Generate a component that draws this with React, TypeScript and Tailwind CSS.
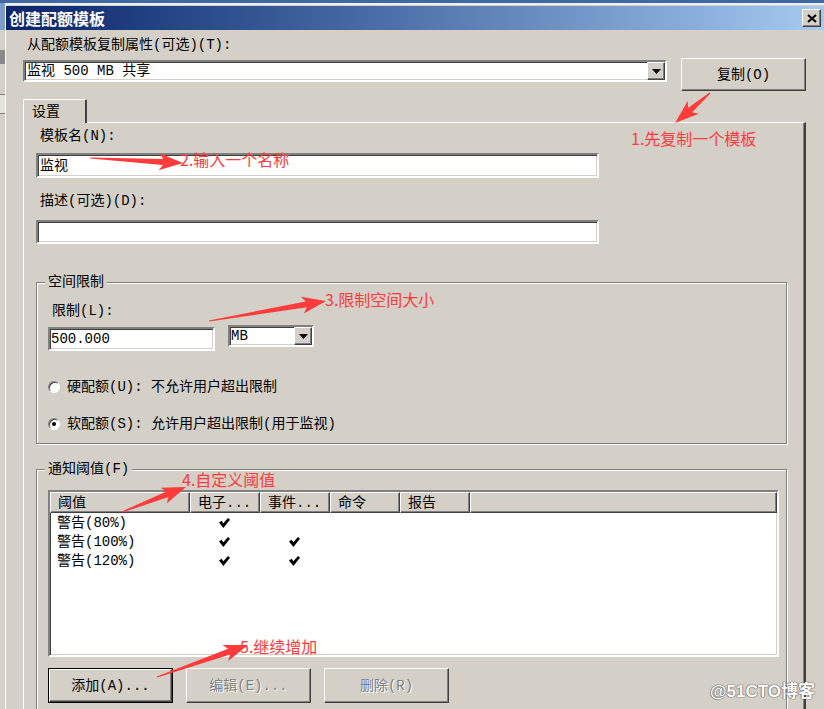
import React from "react";

const raised =
  "border border-t-white border-l-white border-b-[#404040] border-r-[#404040] shadow-[inset_-1px_-1px_0_#808080]";
const sunken =
  "border-2 border-t-[#808080] border-l-[#808080] border-b-white border-r-white shadow-[inset_1px_1px_0_#404040,inset_-1px_-1px_0_#d4d0c8]";
const etched = "border border-[#808080] shadow-[inset_1px_1px_0_#fff,1px_1px_0_#fff]";

function DropButton() {
  return (
    <div className={`w-[18px] h-full bg-[#d4d0c8] flex items-center justify-center ${raised}`}>
      <svg width="9" height="5" viewBox="0 0 9 5">
        <polygon points="0,0 9,0 4.5,5" fill="#000" />
      </svg>
    </div>
  );
}

function Check() {
  return (
    <svg width="11" height="10" viewBox="0 0 11 10">
      <polygon points="0,4.6 2.6,2.8 4.4,5.2 9,0 11,1.8 4.4,10" fill="#000" />
    </svg>
  );
}

function Radio({ checked, label }: { checked?: boolean; label: string }) {
  return (
    <div className="flex items-center h-[16px]">
      <div className="w-[12px] h-[12px] rounded-full bg-white border border-t-[#808080] border-l-[#808080] border-b-white border-r-white shadow-[inset_1px_1px_0_#404040] flex items-center justify-center">
        {checked && <div className="w-[4px] h-[4px] rounded-full bg-black" />}
      </div>
      <span className="ml-[7px] leading-[16px]">{label}</span>
    </div>
  );
}

function Button({ label, disabled, primary }: { label: string; disabled?: boolean; primary?: boolean }) {
  const inner = (
    <div
      className={`w-full h-full flex items-center justify-center bg-[#d4d0c8] ${raised} ${
        disabled ? "text-[#808080] [text-shadow:1px_1px_0_#fff]" : ""
      }`}
    >
      {label}
    </div>
  );
  return (
    <div className={`w-[125px] h-[35px] ${primary ? "border border-black" : ""}`}>{inner}</div>
  );
}

type Arrow = { x1: number; y1: number; x2: number; y2: number };

function arrowPoints({ x1, y1, x2, y2 }: Arrow) {
  const len = Math.hypot(x2 - x1, y2 - y1);
  const ux = (x2 - x1) / len;
  const uy = (y2 - y1) / len;
  const nx = -uy;
  const ny = ux;
  const head = 20;
  const bx = x2 - ux * head;
  const by = y2 - uy * head;
  const wx = x2 - ux * (head + 4);
  const wy = y2 - uy * (head + 4);
  const pts = [
    [x1 + nx * 0.6, y1 + ny * 0.6],
    [bx + nx * 3, by + ny * 3],
    [wx + nx * 8.5, wy + ny * 8.5],
    [x2, y2],
    [wx - nx * 8.5, wy - ny * 8.5],
    [bx - nx * 3, by - ny * 3],
    [x1 - nx * 0.6, y1 - ny * 0.6],
  ];
  return pts.map((p) => p.map((v) => v.toFixed(1)).join(",")).join(" ");
}

const arrows: Arrow[] = [
  { x1: 710, y1: 93, x2: 675, y2: 123 },
  { x1: 90, y1: 158, x2: 183, y2: 163 },
  { x1: 209, y1: 321, x2: 326, y2: 301 },
  { x1: 122, y1: 512, x2: 186, y2: 487 },
  { x1: 157, y1: 677, x2: 248, y2: 645 },
];

const notes = [
  { x: 631, y: 145, text: "1.先复制一个模板" },
  { x: 180, y: 166, text: "2.输入一个名称" },
  { x: 325, y: 306, text: "3.限制空间大小" },
  { x: 182, y: 486, text: "4.自定义阈值" },
  { x: 240, y: 653, text: "5.继续增加" },
];

const rows = [
  { name: "警告(80%)", mail: true, event: false },
  { name: "警告(100%)", mail: true, event: true },
  { name: "警告(120%)", mail: true, event: true },
];

export default function App() {
  return (
    <div className="relative w-[824px] h-[709px] overflow-hidden bg-[#d4d0c8] flex flex-col text-[14px] leading-none text-black font-['Liberation_Mono','Noto_Sans_CJK_SC',monospace]">
      <div className="h-[3px] shrink-0 bg-[#3d6aa3]" />
      <div className="flex flex-1 min-h-0">
        {/* window behind the dialog */}
        <div className="w-[5px] shrink-0 flex flex-col">
          <div className="h-[27px] bg-[#7d9cc9]" />
          <div className="h-[20px]" />
          <div className="h-[14px] bg-[#8a8a8a]" />
          <div className="h-[30px]" />
          <div className="h-[20px] border-y border-[#808080] bg-[#e4e2dc]" />
          <div className="flex-1" />
        </div>
        <div className="w-px shrink-0 bg-white" />

        <div className="flex-1 flex flex-col border-t-2 border-t-[#eef0f4] pt-px">
          {/* title bar */}
          <div className="h-[24px] shrink-0 flex items-center justify-between pl-[3px] pr-[3px] bg-linear-to-r from-[#0a246a] to-[#a6caf0]">
            <span className="text-white font-bold text-[16px] font-['Noto_Sans_CJK_SC',sans-serif]">创建配额模板</span>
            <div className={`w-[19px] h-[18px] flex items-center justify-center bg-[#d4d0c8] ${raised}`}>
              <svg width="10" height="9" viewBox="0 0 10 9">
                <path d="M1 1 L9 8 M9 1 L1 8" stroke="#000" strokeWidth="2" />
              </svg>
            </div>
          </div>

          {/* body */}
          <div className="pl-[17px] flex flex-col">
            <div className="flex items-start shrink-0">
              <div className="w-[644px] pt-[7px]">
                <div className="h-[16px] leading-[16px] ml-[4px]">从配额模板复制属性(可选)(T):</div>
                <div className={`mt-[7px] h-[22px] bg-white flex items-stretch ${sunken}`}>
                  <div className="flex-1 pl-[2px] flex items-center">监视 500 MB 共享</div>
                  <DropButton />
                </div>
              </div>
              <div className="ml-[14px] mt-[28px]">
                <div className={`w-[125px] h-[33px] flex items-center justify-center ${raised}`}>复制(O)</div>
              </div>
            </div>

            {/* tab */}
            <div className="mt-[8px] shrink-0 relative z-10 -mb-px w-[64px] h-[24px] bg-[#d4d0c8] border-l border-t border-t-white border-l-white border-r-2 border-r-[#404040] rounded-t-[2px] pl-[8px] pt-[4px] leading-[16px]">
              设置
            </div>

            {/* tab panel */}
            <div className="w-[783px] h-[700px] shrink-0 border-l border-t border-l-white border-t-white border-r-2 border-r-[#404040] shadow-[inset_-1px_0_0_#808080] pl-[12px] flex flex-col">
              <div className="mt-[5px] ml-[4px] h-[16px] shrink-0 leading-[16px]">模板名(N):</div>
              <div className={`mt-[9px] w-[563px] h-[25px] shrink-0 bg-white pl-[2px] flex items-center ${sunken}`}>监视</div>
              <div className="mt-[15px] ml-[4px] h-[16px] shrink-0 leading-[16px]">描述(可选)(D):</div>
              <div className={`mt-[11px] w-[563px] h-[24px] shrink-0 bg-white ${sunken}`} />

              {/* space limit */}
              <div className={`relative mt-[38px] w-[751px] h-[162px] shrink-0 pl-[11px] ${etched}`}>
                <span className="absolute left-[8px] -top-[9px] px-[3px] bg-[#d4d0c8] leading-[16px]">空间限制</span>
                <div className="mt-[20px] ml-[4px] h-[16px] leading-[16px]">限制(L):</div>
                <div className="mt-[6px] flex items-start">
                  <div className={`mt-[2px] w-[167px] h-[24px] bg-white pl-[1px] flex items-center ${sunken}`}>500.000</div>
                  <div className={`ml-[13px] w-[86px] h-[22px] bg-white flex items-stretch ${sunken}`}>
                    <div className="flex-1 pl-[1px] flex items-center">MB</div>
                    <DropButton />
                  </div>
                </div>
                <div className="mt-[28px]">
                  <Radio label="硬配额(U): 不允许用户超出限制" />
                </div>
                <div className="mt-[21px]">
                  <Radio checked label="软配额(S): 允许用户超出限制(用于监视)" />
                </div>
              </div>

              {/* notification thresholds */}
              <div className={`relative mt-[25px] w-[751px] h-[300px] shrink-0 pl-[11px] ${etched}`}>
                <span className="absolute left-[8px] -top-[9px] px-[3px] bg-[#d4d0c8] leading-[16px]">通知阈值(F)</span>
                <div className={`mt-[20px] w-[731px] h-[167px] bg-white flex flex-col ${sunken}`}>
                  <div className="flex h-[21px] shrink-0">
                    {[
                      { t: "阈值", w: "w-[140px]" },
                      { t: "电子...", w: "w-[70px]" },
                      { t: "事件...", w: "w-[70px]" },
                      { t: "命令", w: "w-[70px]" },
                      { t: "报告", w: "w-[70px]" },
                    ].map((c) => (
                      <div key={c.t} className={`${c.w} h-full bg-[#d4d0c8] pl-[7px] flex items-center ${raised}`}>
                        {c.t}
                      </div>
                    ))}
                    <div className={`flex-1 h-full bg-[#d4d0c8] ${raised}`} />
                  </div>
                  {rows.map((r) => (
                    <div key={r.name} className="flex h-[19px] items-center">
                      <div className="w-[140px] pl-[7px]">{r.name}</div>
                      <div className="w-[70px] flex justify-center pr-[2px]">{r.mail && <Check />}</div>
                      <div className="w-[70px] flex justify-center pr-[2px]">{r.event && <Check />}</div>
                    </div>
                  ))}
                </div>
                <div className="mt-[11px] flex gap-[13px]">
                  <Button primary label="添加(A)..." />
                  <Button disabled label="编辑(E)..." />
                  <Button disabled label="删除(R)" />
                </div>
              </div>
            </div>
          </div>
        </div>
      </div>

      {/* annotations */}
      <svg className="absolute inset-0 pointer-events-none" width="824" height="709" viewBox="0 0 824 709">
        {arrows.map((a, i) => (
          <polygon key={i} points={arrowPoints(a)} fill="#ff3b3b" />
        ))}
        {notes.map((n) => (
          <text
            key={n.text}
            x={n.x}
            y={n.y}
            fill="#ff3b3b"
            fontSize="16"
            fontFamily="'Noto Sans CJK SC', sans-serif"
          >
            {n.text}
          </text>
        ))}
      </svg>
      <div className="absolute right-[9px] bottom-[9px] text-[17px] font-bold text-white font-['Liberation_Sans','Noto_Sans_CJK_SC',sans-serif] [text-shadow:0_0_1px_#555,0_0_1px_#555,0_0_1px_#555]">
        @51CTO博客
      </div>
    </div>
  );
}
